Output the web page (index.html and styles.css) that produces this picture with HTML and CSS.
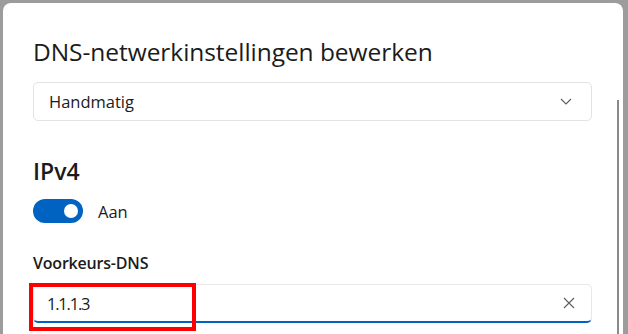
FILE: index.html
```html
<!DOCTYPE html>
<html lang="nl">
  <head>
    <meta charset="UTF-8" />
    <meta name="viewport" content="width=device-width, initial-scale=1.0" />
    <title>DNS-netwerkinstellingen bewerken</title>
    <link rel="stylesheet" href="styles.css">
  </head>
  <body>
    <div id="dialog">
      <h1>DNS-netwerkinstellingen bewerken</h1>
      <div class="select-box">
        <span>Handmatig</span>
        <svg class="chevron" width="12" height="7" viewBox="0 0 12 7">
          <path d="M1 1 L6 6 L11 1" fill="none" stroke="#5c5c5c" stroke-width="1.1" />
        </svg>
      </div>
      <h2>IPv4</h2>
      <div class="toggle-row">
        <div class="toggle"><div class="knob"></div></div>
        <span>Aan</span>
      </div>
      <label class="field-label" for="dns-txt">Voorkeurs-DNS</label>
      <div class="input-box">
        <span class="value">1.1.1.3</span>
        <svg class="clear" width="12" height="12" viewBox="0 0 12 12">
          <path d="M1 1 L11 11 M11 1 L1 11" fill="none" stroke="#5c5c5c" stroke-width="1.1" />
        </svg>
        <div class="highlight"></div>
      </div>
      <div class="scrollbar"></div>
    </div>
  </body>
</html>
```

FILE: styles.css
```css
* {
  box-sizing: border-box;
  margin: 0;
  padding: 0;
}
html,
body {
  height: 100%;
  overflow: hidden;
}
body {
  font-family: "Open Sans", "Noto Sans", sans-serif;
  color: #1b1b1b;
  background-color: #9c9c9c;
  padding: 3px 5px 0 3px;
}
#dialog {
  position: relative;
  background-color: #fff;
  border-radius: 8px 8px 0 0;
  height: 100%;
  padding: 33px 31px 0 30px;
}
h1 {
  font-size: 24.5px;
  font-weight: 500;
  line-height: 32px;
  letter-spacing: -0.05px;
}
.select-box {
  display: flex;
  align-items: center;
  justify-content: space-between;
  margin-top: 14px;
  height: 39px;
  padding: 0 19px 0 15px;
  border: 1px solid #e3e3e3;
  border-radius: 5px;
  font-size: 16.5px;
}
h2 {
  margin-top: 34px;
  font-size: 23px;
  font-weight: 600;
  line-height: 32px;
}
.toggle-row {
  display: flex;
  align-items: center;
  gap: 15px;
  margin-top: 12px;
  height: 24px;
  font-size: 16.5px;
}
.toggle {
  display: flex;
  align-items: center;
  justify-content: flex-end;
  width: 50px;
  height: 24px;
  padding-right: 5px;
  border-radius: 12px;
  background-color: #0063c1;
}
.knob {
  width: 14px;
  height: 14px;
  border-radius: 50%;
  background-color: #fff;
}
.field-label {
  display: block;
  margin-top: 28px;
  font-size: 16px;
  font-weight: 600;
  line-height: 24px;
  letter-spacing: -0.2px;
}
.input-box {
  position: relative;
  display: flex;
  align-items: center;
  justify-content: space-between;
  margin-top: 9px;
  height: 39px;
  padding: 0 16px 0 13px;
  border: 1px solid #e8e8e8;
  border-bottom: 2px solid #0063c1;
  border-radius: 5px;
  font-size: 16.5px;
}
.value {
  letter-spacing: -1.2px;
}
.highlight {
  position: absolute;
  left: -5px;
  top: -2px;
  width: 167px;
  height: 48px;
  border: 4px solid #ff0000;
}
.scrollbar {
  position: absolute;
  right: 4px;
  top: 97px;
  bottom: 0;
  width: 2px;
  background-color: #8a8a8a;
}
```
